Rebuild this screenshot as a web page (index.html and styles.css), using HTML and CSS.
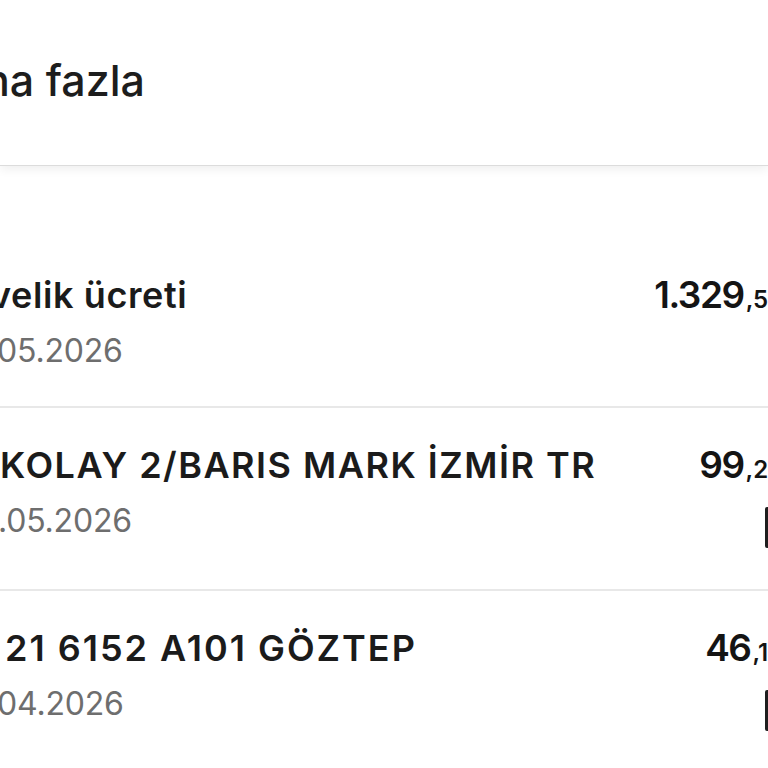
FILE: index.html
```html
<!DOCTYPE html>
<html lang="tr">
<head>
<meta charset="utf-8">
<title>Hesap hareketleri</title>
<link rel="stylesheet" href="styles.css">
</head>
<body>
<div class="viewport">
  <header class="top">
    <h1 class="heading">na fazla</h1>
  </header>
  <ul class="list">
    <li class="row">
      <div class="info">
        <div class="name cut-v">velik ücreti</div>
        <div class="date cut-d">05.2026</div>
      </div>
      <div class="side">
        <div class="amount"><span class="int">1.329</span><span class="dec">,50</span></div>
      </div>
    </li>
    <li class="row">
      <div class="info">
        <div class="name">KOLAY 2/BARIS MARK İZMİR TR</div>
        <div class="date cut-dot">.05.2026</div>
      </div>
      <div class="side">
        <div class="amount"><span class="int">99</span><span class="dec">,20</span></div>
        <div class="card-icon"></div>
      </div>
    </li>
    <li class="row">
      <div class="info">
        <div class="name shift">21 6152 A101 GÖZTEP</div>
        <div class="date cut-d">04.2026</div>
      </div>
      <div class="side">
        <div class="amount"><span class="int">46</span><span class="dec">,10</span></div>
        <div class="card-icon"></div>
      </div>
    </li>
  </ul>
</div>
</body>
</html>
```
FILE: styles.css
```css
html, body {
  margin: 0;
  padding: 0;
  background: #ffffff;
}
body {
  font-family: Inter, "Noto Sans", sans-serif;
  color: #1b1b1b;
}
.viewport {
  width: 768px;
  height: 768px;
  overflow: hidden;
  position: relative;
}
.top {
  box-sizing: border-box;
  height: 166px;
  padding-top: 54px;
  border-bottom: 1px solid #dcdcdc;
  box-shadow: 0 3px 10px rgba(0, 0, 0, 0.07);
  background: #fff;
  position: relative;
  z-index: 1;
}
.heading {
  margin: 0 0 0 -16px;
  font-size: 43px;
  line-height: 53px;
  font-weight: 500;
  letter-spacing: 0;
  color: #1d1d1d;
}
.list {
  list-style: none;
  margin: 0;
  padding: 72px 0 0 0;
  width: 840px;
}
.row {
  display: flex;
  justify-content: space-between;
  align-items: flex-start;
  padding: 35px 56px 35px 0;
  border-bottom: 2px solid #e8e8e8;
}
.info {
  display: flex;
  flex-direction: column;
}
.name {
  font-size: 36px;
  line-height: 44px;
  font-weight: 600;
  letter-spacing: 1.5px;
  white-space: nowrap;
  color: #1b1b1b;
}
.date {
  margin-top: 14px;
  font-size: 32px;
  line-height: 40px;
  font-weight: 400;
  color: #6e6e6e;
  letter-spacing: -0.2px;
}
.cut-v { margin-left: -10px; letter-spacing: 0.6px; }
.cut-d { margin-left: -3px; }
.cut-dot { margin-left: -2px; }
.shift { margin-left: 5px; letter-spacing: 2px; }
.side {
  display: flex;
  flex-direction: column;
  align-items: flex-end;
}
.amount {
  font-size: 37px;
  line-height: 44px;
  font-weight: 600;
  white-space: nowrap;
  color: #141414;
}
.int {
  letter-spacing: -1.5px;
}
.dec {
  font-size: 24px;
  font-weight: 600;
  margin-left: 2px;
}
.card-icon {
  box-sizing: border-box;
  width: 19px;
  height: 41px;
  margin-top: 15px;
  margin-bottom: 6px;
  border: 3px solid #1e1e1e;
  border-radius: 2px;
}
```
